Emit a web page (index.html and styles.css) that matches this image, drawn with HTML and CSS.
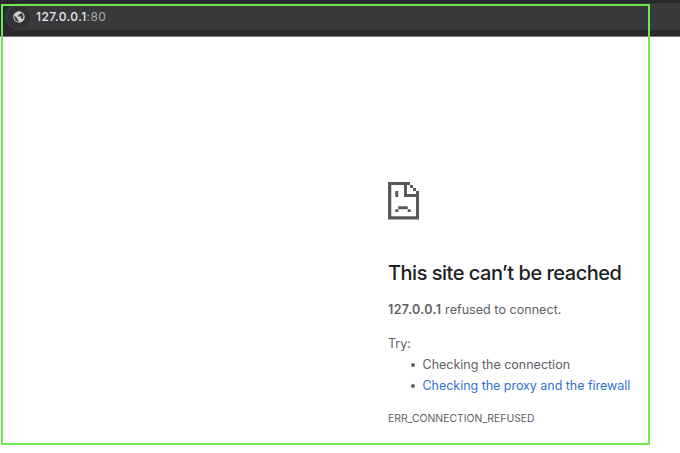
FILE: index.html
```html
<!DOCTYPE html>
<html lang="en">
<head>
<meta charset="utf-8">
<title>127.0.0.1</title>
<link rel="stylesheet" href="styles.css">
</head>
<body>
<header class="toolbar">
  <div class="omnibox">
    <span class="site-info">
      <svg width="12" height="12" viewBox="0 0 24 24"><circle cx="12" cy="12" r="11.5" fill="#cfd0d1"/><path d="M3 9l6 6v2l2 2v3C5.500 21.500 1.500 16 3 9zM16 3v1c0 1.200-.8 2-2 2h-2v2c0 .7-.5 1-1 1H9v2h6c.7 0 1 .5 1 1v3h1c1 0 1.700.6 2 1.500C22.500 12 21 5.500 16 3z" fill="#3d3e40"/></svg>
    </span>
    <span class="address">127.0.0.1<span class="port">:80</span></span>
  </div>
</header>
<main class="error">
  <svg class="sad-file" width="32" height="38" viewBox="0 0 32 38" fill="#57585b"><path fill-rule="evenodd" d="M0 0H22V3H25V6H28V9H31V37.500H0ZM3.300 3V34.300H28V15H16V3ZM19 3V12H28V9H25V6H22V3Z"/><path d="M7.300 9h2.900v6H7.300zM10.300 24.300h9.400v2.900h-9.400zM7.300 27.200h3v2.900h-3zM19.700 27.200h3v2.900h-3z"/></svg>
  <h1>This site can’t be reached</h1>
  <p class="summary"><strong>127.0.0.1</strong> refused to connect.</p>
  <p class="try">Try:</p>
  <ul>
    <li><span class="check">Checking the connection</span></li>
    <li><a class="proxy">Checking the proxy and the firewall</a></li>
  </ul>
  <p class="code">ERR_CONNECTION_REFUSED</p>
</main>
<div class="highlight"></div>
</body>
</html>
```
FILE: styles.css
```css
body {
  margin: 0;
  height: 453px;
  overflow: hidden;
  background: #fff;
  color: #5f6064;
  font-family: Inter, "Liberation Sans", sans-serif;
}
.toolbar {
  box-sizing: border-box;
  height: 37px;
  padding: 3px 0 6px 5px;
  background: #29292b;
  border-bottom: 1px solid #777879;
}
.omnibox {
  display: flex;
  align-items: center;
  height: 27px;
  background: #38393b;
  border-radius: 14px 0 0 14px;
}
.site-info {
  display: flex;
  align-items: center;
  justify-content: center;
  width: 22px;
  height: 22px;
  margin-left: 3px;
  border-radius: 50%;
  background: #303133;
}
.address {
  margin-left: 6px;
  color: #e8e8e9;
  font-size: 12px;
  font-weight: 500;
  letter-spacing: 0.42px;
}
.port {
  color: #a9aaac;
  font-weight: 400;
}
.error {
  padding: 145px 0 0 388px;
  font-size: 12.500px;
  line-height: 20px;
  white-space: nowrap;
}
.sad-file {
  display: block;
}
h1 {
  margin: 40px 0 0;
  color: #202124;
  font-size: 20px;
  font-weight: 500;
  line-height: 26px;
  letter-spacing: -0.49px;
}
p {
  margin: 0;
}
.summary {
  margin-top: 14px;
  letter-spacing: 0.05px;
}
strong {
  font-weight: 600;
  letter-spacing: 0.4px;
}
.try {
  margin-top: 14px;
}
ul {
  margin: 0;
  padding: 1px 0 0 23px;
  list-style: none;
}
li {
  display: flex;
  align-items: center;
  height: 20.500px;
}
li::before {
  content: "";
  width: 4px;
  height: 4px;
  margin-right: 7.500px;
  border-radius: 50%;
  background: #5f6064;
}
.proxy {
  color: #3470d2;
  letter-spacing: -0.03px;
}
.code {
  margin-top: 12.500px;
  font-size: 10.400px;
}
.highlight {
  position: absolute;
  box-sizing: border-box;
  left: 1px;
  top: 4px;
  width: 649px;
  height: 441px;
  border: 2px solid #70e850;
}
```
